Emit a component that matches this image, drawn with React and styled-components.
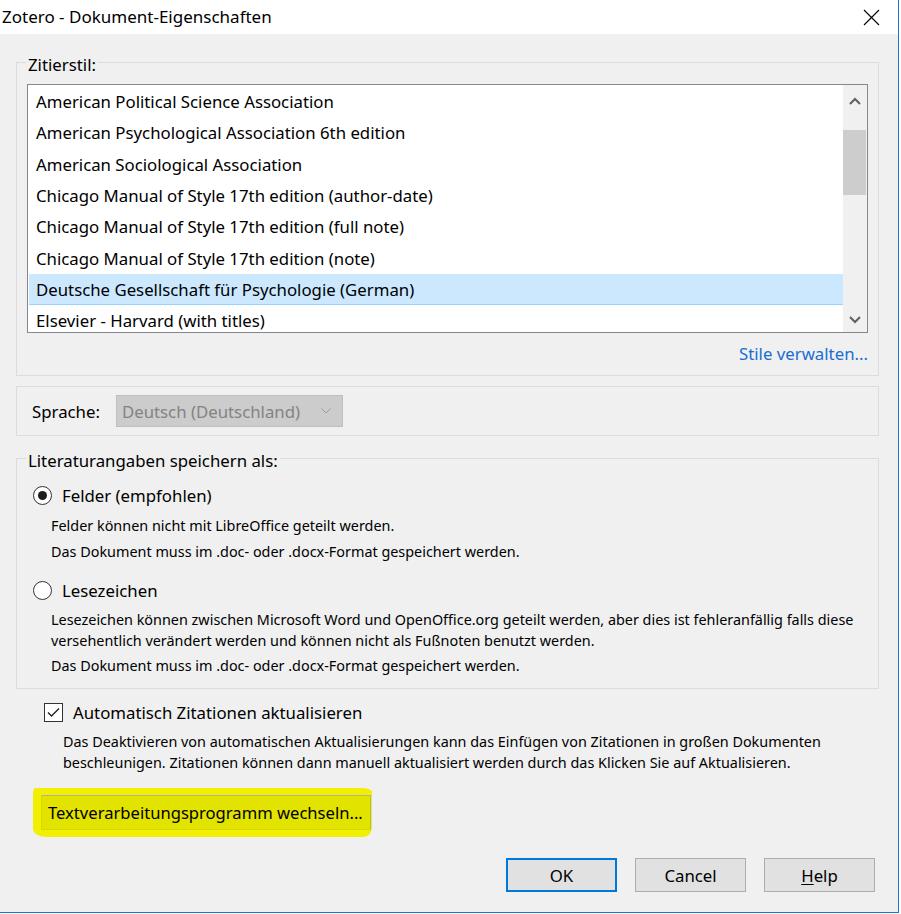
import React from "react";
import styled, { createGlobalStyle } from "styled-components";

const Global = createGlobalStyle`
  html, body { margin: 0; padding: 0; background: #ffffff; }
  body { font-family: "Noto Sans", "Open Sans", sans-serif; color: #000; }
`;

const Window = styled.div`
  width: 898px;
  height: 912px;
  background: #f0f0f0;
  border-right: 1px solid #1f73c8;
  border-bottom: 1px solid #1f73c8;
  display: flex;
  flex-direction: column;
`;

const TitleBar = styled.div`
  height: 34px;
  background: #ffffff;
  display: flex;
  align-items: center;
  justify-content: space-between;
  padding: 0 18px 0 2px;
  flex-shrink: 0;
`;

const Title = styled.div`
  font-size: 17px;
  color: #000;
  margin-top: -1px;
`;

const Body = styled.div`
  padding: 15px 19px 0 16px;
  display: flex;
  flex-direction: column;
`;

const Group = styled.fieldset`
  margin: 0;
  border: 1px solid #dcdcdc;
  padding: ${(p) => p.$pad || "0"};
  min-width: 0;
  margin-top: ${(p) => p.$mt || "0"};
  display: flex;
  flex-direction: column;
`;

const Legend = styled.legend`
  font-size: 16.8px;
  padding: 6px 2px 0;
  margin-left: ${(p) => p.$ml || "9px"};
  line-height: 20px;
`;

const ListBox = styled.div`
  height: 247px;
  border: 1px solid #828790;
  background: #fff;
  display: flex;
`;

const Rows = styled.div`
  flex: 1;
  padding-top: 1px;
  padding-left: 1px;
`;

const Row = styled.div`
  height: 31.3px;
  display: flex;
  align-items: center;
  padding-left: 7px;
  font-size: 16.8px;
  background: ${(p) => (p.$sel ? "#cce8ff" : "transparent")};
  box-shadow: ${(p) => (p.$sel ? "inset 0 -1px 0 #99d1ff" : "none")};
`;

const ScrollBar = styled.div`
  width: 24px;
  background: #f0f0f0;
  display: flex;
  flex-direction: column;
  align-items: stretch;
`;

const ScrollArrow = styled.div`
  height: ${(p) => p.$h}px;
  display: flex;
  align-items: center;
  justify-content: center;
  flex-shrink: 0;
`;

const Track = styled.div`
  flex: 1;
  display: flex;
  flex-direction: column;
  padding: 13px 1px 0 0;
`;

const Thumb = styled.div`
  height: 65px;
  background: #cdcdcd;
`;

const LinkRow = styled.div`
  display: flex;
  justify-content: flex-end;
  padding: 9px 0 10px;
`;

const Link = styled.span`
  color: #1a6ed2;
  font-size: 16.8px;
`;

const SpracheRow = styled.div`
  height: 48px;
  display: flex;
  align-items: center;
  padding-left: 15px;
  gap: 16px;
`;

const Label = styled.span`
  font-size: 16.8px;
`;

const Select = styled.div`
  height: 30px;
  width: 209px;
  background: #cccccc;
  border: 1px solid #bfbfbf;
  display: flex;
  align-items: center;
  justify-content: space-between;
  padding: 0 11px 0 5px;
  box-sizing: content-box;
  color: #838383;
  font-size: 16.8px;
`;

const OptionBlock = styled.div`
  display: flex;
  flex-direction: column;
  padding-left: 16px;
`;

const RadioRow = styled.div`
  display: flex;
  align-items: center;
  gap: 10px;
  height: 30px;
  margin-top: ${(p) => p.$mt || "0"};
`;

const RadioCircle = styled.span`
  width: 17px;
  height: 17px;
  border-radius: 50%;
  border: 1px solid #333;
  background: #fff;
  display: flex;
  align-items: center;
  justify-content: center;
  &::after {
    content: "";
    display: ${(p) => (p.$on ? "block" : "none")};
    width: 9px;
    height: 9px;
    border-radius: 50%;
    background: #1e1e1e;
  }
`;

const OptionLabel = styled.span`
  font-size: 16.8px;
`;

const Desc = styled.div`
  font-size: 14.4px;
  line-height: 21px;
  padding-left: ${(p) => p.$pl || "18px"};
  margin-top: ${(p) => p.$mt || "0"};
`;

const CheckRow = styled.div`
  display: flex;
  align-items: center;
  gap: 10px;
  height: 26px;
  padding-left: 28px;
  margin-top: 10px;
`;

const CheckBox = styled.span`
  width: 17px;
  height: 17px;
  border: 1px solid #333;
  background: #fff;
  display: flex;
  align-items: center;
  justify-content: center;
`;

const Highlight = styled.div`
  align-self: flex-start;
  margin-top: 15px;
  margin-left: 17px;
  padding: 7px 1px 7px 8px;
  background: #f0f000;
  border-radius: 2px 10px 8px 14px / 6px 4px 10px 8px;
`;

const WideButton = styled.div`
  width: 330px;
  height: 35px;
  border: 1px solid #adadad;
  border-left-color: #d6d600;
  border-bottom-color: #d6d600;
  background: #e3e300;
  display: flex;
  align-items: center;
  padding-left: 6px;
  box-sizing: border-box;
  font-size: 16.6px;
`;

const Footer = styled.div`
  display: flex;
  justify-content: flex-end;
  gap: 18px;
  padding: 21px 4px 0 0;
`;

const Button = styled.div`
  width: 111px;
  height: 34px;
  box-sizing: border-box;
  background: #e1e1e1;
  border: ${(p) => (p.$def ? "2px solid #0078d7" : "1px solid #adadad")};
  display: flex;
  align-items: center;
  justify-content: center;
  font-size: 16.8px;
`;

const U = styled.span`
  text-decoration: underline;
  text-underline-offset: 2px;
`;

const styles = [
  "American Political Science Association",
  "American Psychological Association 6th edition",
  "American Sociological Association",
  "Chicago Manual of Style 17th edition (author-date)",
  "Chicago Manual of Style 17th edition (full note)",
  "Chicago Manual of Style 17th edition (note)",
  "Deutsche Gesellschaft für Psychologie (German)",
  "Elsevier - Harvard (with titles)",
];

export default function App() {
  return (
    <>
      <Global />
      <Window>
        <TitleBar>
          <Title>Zotero - Dokument-Eigenschaften</Title>
          <svg width="17" height="17" viewBox="0 0 17 17">
            <path d="M1 1 L16 16 M16 1 L1 16" stroke="#000" strokeWidth="1.1" fill="none" />
          </svg>
        </TitleBar>
        <Body>
          <Group $pad="9px 10px 0 10px">
            <Legend $ml="-1px">Zitierstil:</Legend>
            <ListBox>
              <Rows>
                {styles.map((s, i) => (
                  <Row key={s} $sel={i === 6}>
                    {s}
                  </Row>
                ))}
              </Rows>
              <ScrollBar>
                <ScrollArrow $h={32}>
                  <svg width="12" height="8" viewBox="0 0 12 8">
                    <path d="M1 7 L6 2 L11 7" stroke="#606060" strokeWidth="2" fill="none" />
                  </svg>
                </ScrollArrow>
                <Track>
                  <Thumb />
                </Track>
                <ScrollArrow $h={24}>
                  <svg width="12" height="8" viewBox="0 0 12 8">
                    <path d="M1 1 L6 6 L11 1" stroke="#606060" strokeWidth="2" fill="none" />
                  </svg>
                </ScrollArrow>
              </ScrollBar>
            </ListBox>
            <LinkRow>
              <Link>Stile verwalten...</Link>
            </LinkRow>
          </Group>

          <Group $mt="10px">
            <SpracheRow>
              <Label>Sprache:</Label>
              <Select>
                <span>Deutsch (Deutschland)</span>
                <svg width="10" height="6" viewBox="0 0 10 6">
                  <path d="M0.5 0.5 L5 5 L9.5 0.5" stroke="#9a9a9a" strokeWidth="1" fill="none" />
                </svg>
              </Select>
            </SpracheRow>
          </Group>

          <Group $mt="9px" $pad="0 0 12px 0">
            <Legend $ml="9px">Literaturangaben speichern als:</Legend>
            <OptionBlock>
              <RadioRow $mt="9px">
                <RadioCircle $on />
                <OptionLabel>Felder (empfohlen)</OptionLabel>
              </RadioRow>
              <Desc $mt="5px">Felder können nicht mit LibreOffice geteilt werden.</Desc>
              <Desc $mt="5px">Das Dokument muss im .doc- oder .docx-Format gespeichert werden.</Desc>
              <RadioRow $mt="13px">
                <RadioCircle />
                <OptionLabel>Lesezeichen</OptionLabel>
              </RadioRow>
              <Desc $mt="4px">
                Lesezeichen können zwischen Microsoft Word und OpenOffice.org geteilt werden, aber dies ist fehleranfällig falls diese
                <br />
                versehentlich verändert werden und können nicht als Fußnoten benutzt werden.
              </Desc>
              <Desc $mt="4px">Das Dokument muss im .doc- oder .docx-Format gespeichert werden.</Desc>
            </OptionBlock>
          </Group>

          <CheckRow>
            <CheckBox>
              <svg width="13" height="11" viewBox="0 0 13 11">
                <path d="M1 5.5 L4.5 9 L12 1.5" stroke="#222" strokeWidth="1.4" fill="none" />
              </svg>
            </CheckBox>
            <OptionLabel>Automatisch Zitationen aktualisieren</OptionLabel>
          </CheckRow>
          <Desc $pl="47px" $mt="6px">
            Das Deaktivieren von automatischen Aktualisierungen kann das Einfügen von Zitationen in großen Dokumenten
            <br />
            beschleunigen. Zitationen können dann manuell aktualisiert werden durch das Klicken Sie auf Aktualisieren.
          </Desc>

          <Highlight>
            <WideButton>Textverarbeitungsprogramm wechseln...</WideButton>
          </Highlight>

          <Footer>
            <Button $def>OK</Button>
            <Button>Cancel</Button>
            <Button>
              <U>H</U>elp
            </Button>
          </Footer>
        </Body>
      </Window>
    </>
  );
}
